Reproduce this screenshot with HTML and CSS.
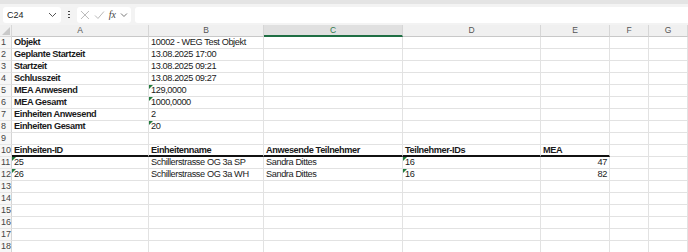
FILE: index.html
```html
<!DOCTYPE html>
<html lang="de">
<head>
<meta charset="utf-8">
<title>Excel</title>
<link rel="stylesheet" href="styles.css">
</head>
<body>
<div class="app">
  <div class="topstrip"></div>
  <div class="fbar">
    <div class="namebox"><span>C24</span>
      <svg class="chev" width="9" height="6" viewBox="0 0 9 6"><path d="M1 1l3.5 3.5L8 1" fill="none" stroke="#555" stroke-width="1"/></svg>
    </div>
    <div class="dots"><i></i><i></i><i></i></div>
    <div class="fnbox">
      <svg width="10" height="10" viewBox="0 0 10 10"><path d="M1 1l8 8M9 1l-8 8" stroke="#b8b8b8" stroke-width="1"/></svg>
      <svg width="11" height="10" viewBox="0 0 11 10"><path d="M1 5.5l3 3L10 1.5" fill="none" stroke="#b8b8b8" stroke-width="1"/></svg>
      <span class="fx">fx</span>
      <svg width="8" height="6" viewBox="0 0 8 6"><path d="M1 1.5l3 3 3-3" fill="none" stroke="#777" stroke-width="1"/></svg>
    </div>
    <div class="finput"></div>
  </div>
  <div class="sheet">
    <div class="corner"><svg width="8" height="8" viewBox="0 0 8 8"><path d="M8 0V8H0Z" fill="#c9c9c9"/></svg></div>
    <div class="ch">A</div><div class="ch">B</div><div class="ch sel">C</div><div class="ch">D</div><div class="ch">E</div><div class="ch">F</div><div class="ch">G</div>

    <div class="rh">1</div><div class="c b">Objekt</div><div class="c">10002 - WEG Test Objekt</div><div class="c"></div><div class="c"></div><div class="c"></div><div class="c"></div><div class="c"></div>
    <div class="rh">2</div><div class="c b">Geplante Startzeit</div><div class="c">13.08.2025 17:00</div><div class="c"></div><div class="c"></div><div class="c"></div><div class="c"></div><div class="c"></div>
    <div class="rh">3</div><div class="c b">Startzeit</div><div class="c">13.08.2025 09:21</div><div class="c"></div><div class="c"></div><div class="c"></div><div class="c"></div><div class="c"></div>
    <div class="rh">4</div><div class="c b">Schlusszeit</div><div class="c">13.08.2025 09:27</div><div class="c"></div><div class="c"></div><div class="c"></div><div class="c"></div><div class="c"></div>
    <div class="rh">5</div><div class="c b">MEA Anwesend</div><div class="c mark">129,0000</div><div class="c"></div><div class="c"></div><div class="c"></div><div class="c"></div><div class="c"></div>
    <div class="rh">6</div><div class="c b">MEA Gesamt</div><div class="c mark">1000,0000</div><div class="c"></div><div class="c"></div><div class="c"></div><div class="c"></div><div class="c"></div>
    <div class="rh">7</div><div class="c b">Einheiten Anwesend</div><div class="c">2</div><div class="c"></div><div class="c"></div><div class="c"></div><div class="c"></div><div class="c"></div>
    <div class="rh">8</div><div class="c b">Einheiten Gesamt</div><div class="c mark">20</div><div class="c"></div><div class="c"></div><div class="c"></div><div class="c"></div><div class="c"></div>
    <div class="rh">9</div><div class="c"></div><div class="c"></div><div class="c"></div><div class="c"></div><div class="c"></div><div class="c"></div><div class="c"></div>
    <div class="rh">10</div><div class="c b hd">Einheiten-ID</div><div class="c b hd">Einheitenname</div><div class="c b hd">Anwesende Teilnehmer</div><div class="c b hd">Teilnehmer-IDs</div><div class="c b hd">MEA</div><div class="c"></div><div class="c"></div>
    <div class="rh">11</div><div class="c mark">25</div><div class="c">Schillerstrasse OG 3a SP</div><div class="c">Sandra Dittes</div><div class="c mark">16</div><div class="c num">47</div><div class="c"></div><div class="c"></div>
    <div class="rh">12</div><div class="c mark">26</div><div class="c">Schillerstrasse OG 3a WH</div><div class="c">Sandra Dittes</div><div class="c mark">16</div><div class="c num">82</div><div class="c"></div><div class="c"></div>
    <div class="rh">13</div><div class="c"></div><div class="c"></div><div class="c"></div><div class="c"></div><div class="c"></div><div class="c"></div><div class="c"></div>
    <div class="rh">14</div><div class="c"></div><div class="c"></div><div class="c"></div><div class="c"></div><div class="c"></div><div class="c"></div><div class="c"></div>
    <div class="rh">15</div><div class="c"></div><div class="c"></div><div class="c"></div><div class="c"></div><div class="c"></div><div class="c"></div><div class="c"></div>
    <div class="rh">16</div><div class="c"></div><div class="c"></div><div class="c"></div><div class="c"></div><div class="c"></div><div class="c"></div><div class="c"></div>
    <div class="rh">17</div><div class="c"></div><div class="c"></div><div class="c"></div><div class="c"></div><div class="c"></div><div class="c"></div><div class="c"></div>
    <div class="rh">18</div><div class="c"></div><div class="c"></div><div class="c"></div><div class="c"></div><div class="c"></div><div class="c"></div><div class="c"></div>
  </div>
</div>
</body>
</html>
```

FILE: styles.css
```css
* { box-sizing: border-box; }
html, body { margin: 0; padding: 0; background: #fff; }
body { width: 688px; height: 252px; overflow: hidden; font-family: "Liberation Sans", Arial, sans-serif; }
.app { display: flex; flex-direction: column; }
.topstrip { height: 4px; background: #e4e4e4; }
.fbar { height: 21px; background: #f3f3f3; display: flex; align-items: center; padding: 0 0 0 3px; gap: 0; }
.namebox { width: 58px; height: 16px; background: #fff; border-radius: 3px; display: flex; align-items: center; justify-content: space-between; padding: 0 4px 0 4px; font-size: 9px; color: #222; }
.chev { margin-top: 1px; }
.dots { width: 16px; display: flex; flex-direction: column; align-items: center; gap: 1.5px; }
.dots i { width: 1.5px; height: 1.5px; background: #444; display: block; }
.fnbox { width: 54px; height: 16px; background: #fff; border-radius: 3px; display: flex; align-items: center; gap: 4px; padding: 0 3px; }
.fx { font-family: "Liberation Serif", serif; font-style: italic; font-size: 10px; color: #444; }
.finput { flex: 1; height: 16px; background: #fff; margin-left: 4px; border-radius: 3px 0 0 3px; }
.sheet { margin-top: 0; display: grid; grid-template-columns: 12px 137px 115px 139px 138px 69px 39px 1fr; grid-template-rows: 12px repeat(18, 12px); font-size: 9.2px; letter-spacing: -0.4px; line-height: 11px; font-family: "Liberation Sans", sans-serif; }
.corner { background: #f0f0f0; border-right: 1px solid #d8d8d8; border-bottom: 1px solid #d8d8d8; display: flex; align-items: flex-end; justify-content: flex-end; padding: 0 1px 1px 0; }
.ch { background: #f0f0f0; color: #555; font-size: 8.5px; letter-spacing: 0; text-align: center; border-right: 1px solid #d6d6d6; border-bottom: 1px solid #c8c8c8; line-height: 11px; }
.ch.sel { background: #e0e0e0; color: #2f7a4c; border-bottom: 2px solid #1f6e43; }
.rh { background: #f7f7f7; color: #444; font-size: 9px; letter-spacing: 0; padding-left: 1px; border-right: 1px solid #d4d4d4; border-bottom: 1px solid #e6e6e6; line-height: 11px; }
.c { border-right: 1px solid #e2e2e2; border-bottom: 1px solid #e2e2e2; padding-left: 2px; color: #1a1a1a; white-space: nowrap; overflow: visible; position: relative; }
.b { font-weight: bold; }
.hd { border-bottom: 2px solid #111; }
.num { text-align: right; padding-right: 2px; }
.mark::before { content: ""; position: absolute; left: 0; top: 0; border-top: 4px solid #217a3c; border-right: 4px solid transparent; }
```
